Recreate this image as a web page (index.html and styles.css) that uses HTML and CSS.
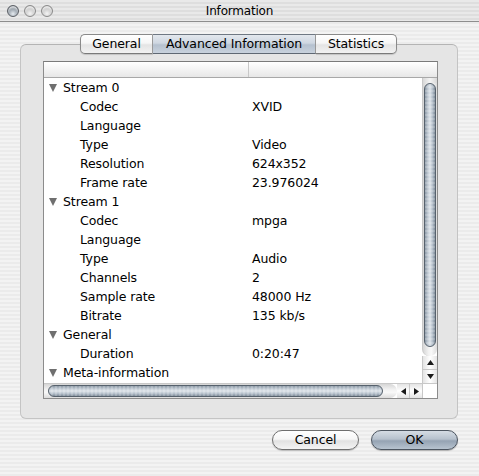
FILE: index.html
```html
<!DOCTYPE html>
<html>
<head>
<meta charset="utf-8">
<link rel="stylesheet" href="styles.css">
</head>
<body>
<div class="window">
  <div class="titlebar">
    <div class="lights">
      <span class="light"></span><span class="light"></span><span class="light"></span>
    </div>
    <div class="title">Information</div>
  </div>
  <div class="body">
    <div class="tabs">
      <div class="tab first">General</div>
      <div class="tab selected">Advanced Information</div>
      <div class="tab last">Statistics</div>
    </div>
    <div class="group">
      <div class="list">
        <div class="header">
          <div class="hcol c1"></div>
          <div class="hcol c2"></div>
        </div>
        <div class="main">
          <div class="rows">
            <div class="row parent"><span class="tri"></span>Stream 0</div>
            <div class="row"><span class="k">Codec</span><span class="v">XVID</span></div>
            <div class="row"><span class="k">Language</span><span class="v"></span></div>
            <div class="row"><span class="k">Type</span><span class="v">Video</span></div>
            <div class="row"><span class="k">Resolution</span><span class="v">624x352</span></div>
            <div class="row"><span class="k">Frame rate</span><span class="v">23.976024</span></div>
            <div class="row parent"><span class="tri"></span>Stream 1</div>
            <div class="row"><span class="k">Codec</span><span class="v">mpga</span></div>
            <div class="row"><span class="k">Language</span><span class="v"></span></div>
            <div class="row"><span class="k">Type</span><span class="v">Audio</span></div>
            <div class="row"><span class="k">Channels</span><span class="v">2</span></div>
            <div class="row"><span class="k">Sample rate</span><span class="v">48000 Hz</span></div>
            <div class="row"><span class="k">Bitrate</span><span class="v">135 kb/s</span></div>
            <div class="row parent"><span class="tri"></span>General</div>
            <div class="row"><span class="k">Duration</span><span class="v">0:20:47</span></div>
            <div class="row parent"><span class="tri"></span>Meta-information</div>
          </div>
          <div class="vscroll">
            <div class="vcap"></div>
            <div class="vtrack"><div class="vthumb"></div></div>
            <div class="arrow up"><svg width="7" height="5" viewBox="0 0 7 5"><path d="M3.5 0 L7 5 L0 5 Z" fill="#1a1a1a"/></svg></div>
            <div class="arrow down"><svg width="7" height="5" viewBox="0 0 7 5"><path d="M0 0 L7 0 L3.5 5 Z" fill="#1a1a1a"/></svg></div>
          </div>
        </div>
        <div class="hbar">
          <div class="htrack"><div class="hthumb"></div></div>
          <div class="harrow left"><svg width="5" height="7" viewBox="0 0 5 7"><path d="M0 3.5 L5 0 L5 7 Z" fill="#1a1a1a"/></svg></div>
          <div class="harrow right"><svg width="5" height="7" viewBox="0 0 5 7"><path d="M0 0 L5 3.5 L0 7 Z" fill="#1a1a1a"/></svg></div>
          <div class="corner"></div>
        </div>
      </div>
    </div>
    <div class="buttons">
      <div class="btn cancel">Cancel</div>
      <div class="btn ok">OK</div>
    </div>
  </div>
</div>
</body>
</html>
```
FILE: styles.css
```css
html, body {
  margin: 0;
  padding: 0;
}
body {
  width: 479px;
  height: 476px;
  overflow: hidden;
  font-family: "DejaVu Sans", "Liberation Sans", sans-serif;
  color: #000;
}
.window {
  width: 479px;
  height: 476px;
  background: repeating-linear-gradient(to bottom, #f3f3f3 0px, #f3f3f3 2px, #ebebeb 2px, #ebebeb 4px);
  display: flex;
  flex-direction: column;
}
.titlebar {
  height: 21px;
  border-bottom: 1px solid #8e8e8e;
  background: repeating-linear-gradient(to bottom, #e9e9e9 0px, #e9e9e9 2px, #dedede 2px, #dedede 4px);
  display: flex;
  align-items: center;
  position: relative;
  box-sizing: content-box;
}
.lights {
  display: flex;
  gap: 5px;
  padding-left: 7px;
}
.light {
  width: 12px;
  height: 12px;
  border-radius: 50%;
  box-sizing: border-box;
  border: 1px solid #8a8a8a;
  background: radial-gradient(circle at 50% 75%, #f4f4f4 0%, #c9c9c9 55%, #a6a6a6 100%);
  box-shadow: inset 0 2px 2px rgba(255,255,255,0.7);
}
.light:first-child {
  border-color: #5c6066;
  background: radial-gradient(circle at 50% 78%, #e6ebf0 0%, #9aa3ac 50%, #5f6770 100%);
}
.title {
  position: absolute;
  left: 0;
  right: 0;
  text-align: center;
  font-size: 12px;
  letter-spacing: -0.2px;
  pointer-events: none;
}
.body {
  display: flex;
  flex-direction: column;
  padding: 12px 21px 0 20px;
}
.tabs {
  display: flex;
  justify-content: center;
  height: 20px;
  position: relative;
  z-index: 2;
  padding-right: 1px;
}
.tab {
  height: 20px;
  box-sizing: border-box;
  border-top: 1px solid #8a8a8a;
  border-bottom: 1px solid #7a7a7a;
  border-right: 1px solid #9a9a9a;
  background: linear-gradient(to bottom, #ffffff 0%, #f6f6f6 45%, #e4e4e4 55%, #f2f2f2 100%);
  font-size: 12.5px;
  letter-spacing: -0.1px;
  line-height: 18px;
  text-align: center;
}
.tab.first {
  width: 73px;
  border-left: 1px solid #8a8a8a;
  border-radius: 5px 0 0 5px;
  box-shadow: 0 1px 1px rgba(0,0,0,0.15);
}
.tab.selected {
  width: 163px;
  background: linear-gradient(to bottom, #e3e8ee 0%, #cfd7e1 45%, #b5c1cf 55%, #c9d2dd 100%);
  border-top-color: #6f7883;
  border-bottom-color: #5f6873;
}
.tab.last {
  width: 81px;
  border-right: 1px solid #8a8a8a;
  border-radius: 0 5px 5px 0;
  box-shadow: 0 1px 1px rgba(0,0,0,0.15);
}
.group {
  margin-top: -10px;
  height: 375px;
  box-sizing: border-box;
  border: 1px solid #c4c4c4;
  border-top-color: #b4b4b4;
  border-radius: 6px;
  background: #e5e5e5;
  padding: 16px 21px 0 22px;
}
.list {
  width: 395px;
  height: 338px;
  box-sizing: border-box;
  border: 1px solid #8c8c8c;
  border-top-color: #7a7a7a;
  background: #fff;
  display: flex;
  flex-direction: column;
}
.header {
  height: 16px;
  flex: none;
  display: flex;
  border-bottom: 1px solid #a8a8a8;
  background: linear-gradient(to bottom, #ffffff 0%, #f3f3f3 50%, #e7e7e7 100%);
  box-sizing: border-box;
}
.hcol.c1 {
  width: 204px;
  border-right: 1px solid #c8c8c8;
}
.hcol.c2 {
  flex: 1;
}
.main {
  flex: 1;
  display: flex;
  min-height: 0;
}
.rows {
  flex: 1;
  overflow: hidden;
}
.row {
  height: 19px;
  display: flex;
  align-items: center;
  font-size: 12.5px;
  letter-spacing: -0.1px;
  white-space: nowrap;
  color: #000;
}
.row.parent {
  padding-left: 5px;
}
.tri {
  width: 0;
  height: 0;
  border-left: 4.5px solid transparent;
  border-right: 4.5px solid transparent;
  border-top: 8px solid #6f6f6f;
  margin-right: 6px;
  margin-top: 1px;
}
.k {
  padding-left: 36px;
  width: 172px;
  flex: none;
}
.v {
  flex: 1;
}
.vscroll {
  width: 15px;
  flex: none;
  display: flex;
  flex-direction: column;
  background: #fff;
}
.vcap {
  height: 5px;
  background: linear-gradient(to right, #d8d8d8, #f4f4f4 50%, #d8d8d8);
  border-left: 1px solid #c8c8c8;
}
.vtrack {
  flex: 1;
  border-left: 1px solid #c8c8c8;
  background: linear-gradient(to right, #d6d6d6 0%, #f2f2f2 40%, #f8f8f8 60%, #dcdcdc 100%);
  border-radius: 0 0 7px 7px;
  padding: 0 1px 0 1px;
  display: flex;
}
.vthumb {
  flex: 1;
  height: 264px;
  border-radius: 6px;
  border: 1px solid #56616c;
  background:
    repeating-linear-gradient(to bottom, rgba(255,255,255,0) 0px, rgba(255,255,255,0) 2px, rgba(255,255,255,0.18) 2px, rgba(255,255,255,0.18) 4px),
    linear-gradient(to right, #8c99a6 0%, #c3ccd5 30%, #dde3e9 50%, #b4bfca 75%, #7f8c99 100%);
  box-sizing: border-box;
}
.arrow {
  height: 13px;
  flex: none;
  display: flex;
  align-items: center;
  justify-content: center;
  border-left: 1px solid #c8c8c8;
  background: linear-gradient(to right, #e4e4e4, #ffffff 50%, #e4e4e4);
}
.arrow.down {
  border-top: 1px solid #c8c8c8;
}
.hbar {
  height: 15px;
  flex: none;
  display: flex;
  border-top: 1px solid #c8c8c8;
  box-sizing: border-box;
}
.htrack {
  flex: 1;
  background: linear-gradient(to bottom, #d6d6d6 0%, #f2f2f2 40%, #f8f8f8 60%, #dcdcdc 100%);
  border-radius: 0 7px 7px 0;
  padding: 1px 14px 1px 4px;
  display: flex;
}
.hthumb {
  flex: 1;
  border-radius: 6px;
  border: 1px solid #56616c;
  background:
    repeating-linear-gradient(to right, rgba(255,255,255,0) 0px, rgba(255,255,255,0) 2px, rgba(255,255,255,0.18) 2px, rgba(255,255,255,0.18) 4px),
    linear-gradient(to bottom, #8c99a6 0%, #c3ccd5 30%, #dde3e9 50%, #b4bfca 75%, #7f8c99 100%);
  box-sizing: border-box;
}
.harrow {
  width: 12px;
  flex: none;
  display: flex;
  align-items: center;
  justify-content: center;
  background: linear-gradient(to bottom, #e4e4e4, #ffffff 50%, #e4e4e4);
}
.harrow.right {
  border-left: 1px solid #c8c8c8;
}
.corner {
  width: 15px;
  flex: none;
  background: #fff;
  border-left: 1px solid #c8c8c8;
  box-sizing: border-box;
}
.buttons {
  display: flex;
  justify-content: flex-end;
  gap: 12px;
  margin-top: 11px;
}
.btn {
  width: 87px;
  height: 20px;
  box-sizing: border-box;
  border-radius: 10px;
  font-size: 12.5px;
  letter-spacing: -0.1px;
  line-height: 18px;
  text-align: center;
}
.btn.cancel {
  border: 1px solid #6f6f6f;
  background: linear-gradient(to bottom, #ffffff 0%, #f6f6f6 45%, #e2e2e2 55%, #f4f4f4 100%);
  box-shadow: 0 1px 1px rgba(0,0,0,0.2);
}
.btn.ok {
  border: 1px solid #4c5560;
  background: linear-gradient(to bottom, #d5dce4 0%, #b6c1cd 45%, #95a3b3 55%, #b7c3cf 100%);
  box-shadow: 0 1px 1px rgba(0,0,0,0.25);
}
```
